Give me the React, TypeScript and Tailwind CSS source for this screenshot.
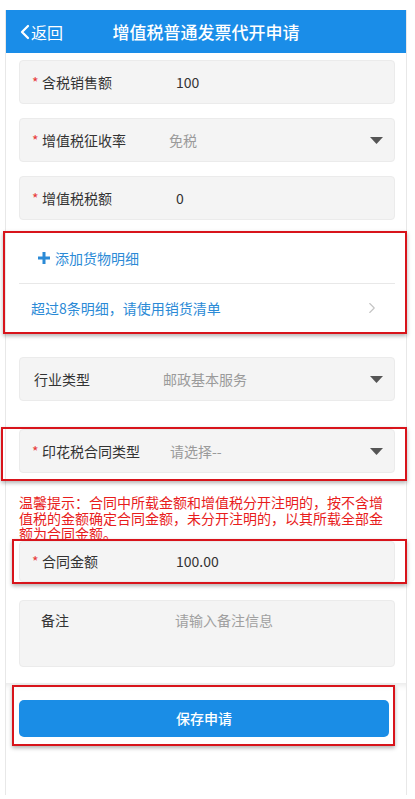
import { ChevronLeft, ChevronRight } from "lucide-react";

const FONT = "font-['Microsoft_YaHei','Noto_Sans_CJK_SC',sans-serif]";

type FieldProps = {
  label: string;
  value: string;
  required?: boolean;
  muted?: boolean;
  select?: boolean;
  labelBox?: string; // width of star+label block
  pad?: string;
  height?: string;
};

function Caret() {
  return (
    <svg width="13" height="7" viewBox="0 0 13 7" className="shrink-0">
      <path d="M0 0 H13 L6.5 7 Z" fill="#555" />
    </svg>
  );
}

function Field({
  label,
  value,
  required = true,
  muted = false,
  select = false,
  labelBox = "w-[144px]",
  pad = "pl-[12px]",
  height = "h-[44px]",
}: FieldProps) {
  return (
    <div
      className={[
        "flex items-center rounded-[4px] border border-[#ebebeb] bg-[#f4f4f4] pr-[11px] text-[14px] leading-[20px]",
        pad,
        height,
      ].join(" ")}
    >
      <div className={["flex shrink-0 items-center", labelBox].join(" ")}>
        {required && <span className="w-[10px] text-[#e83a3a]">*</span>}
        <span className="text-[#333]">{label}</span>
      </div>
      <span className={["flex-1", muted ? "text-[#9a9a9a]" : "text-[#333]"].join(" ")}>
        {value}
      </span>
      {select && <Caret />}
    </div>
  );
}

export default function App() {
  return (
    <div className={["h-[799px] w-full overflow-hidden bg-white pt-[10px]", FONT].join(" ")}>
      <div className="ml-[5px] h-[785px] w-[402px] border-x border-[#e8e8e8]">
        {/* header */}
        <div className="relative flex h-[43px] items-center justify-center bg-[#1a8de8] text-white">
          <div className="absolute left-[7px] top-0 flex h-full items-center">
            <ChevronLeft className="h-[24px] w-[24px]" strokeWidth={2.25} />
            <span className="-ml-[6px] text-[16px]">返回</span>
          </div>
          <span className="text-[17px] font-medium">增值税普通发票代开申请</span>
        </div>

        {/* form */}
        <div className="pl-[13px] pr-[11px] pt-[7px]">
          <Field label="含税销售额" value="100" />
          <div className="mt-[14px]">
            <Field label="增值税征收率" value="免税" muted select labelBox="w-[137px]" />
          </div>
          <div className="mt-[14px]">
            <Field label="增值税税额" value="0" />
          </div>

          {/* 货物明细 */}
          <div className="-ml-[16px] -mr-[12px] mt-[11px] border-2 border-[#d8141b] pl-[14px] pr-[10px] shadow-[0_2px_4px_rgba(0,0,0,0.3)]">
            <div className="flex h-[50px] items-center pl-[19px] text-[14px] text-[#2b8ad6]">
              <svg width="12" height="12" viewBox="0 0 12 12" className="mr-[5px]">
                <path d="M6 0 V12 M0 6 H12" stroke="#2b8ad6" strokeWidth="3" />
              </svg>
              添加货物明细
            </div>
            <div className="h-px bg-[#e8e8e8]" />
            <div className="flex h-[48px] items-center justify-between pl-[12px] pr-[14px] text-[14px] text-[#2b8ad6]">
              <span>超过8条明细，请使用销货清单</span>
              <ChevronRight className="h-[18px] w-[18px] text-[#c4c4c4]" strokeWidth={1.5} />
            </div>
          </div>

          <div className="mt-[23px]">
            <Field
              label="行业类型"
              value="邮政基本服务"
              muted
              select
              required={false}
              pad="pl-[14px]"
              labelBox="w-[129px]"
            />
          </div>

          <div className="-ml-[18px] -mr-[12px] mt-[26px] border-2 border-[#d8141b] pb-[6px] pl-[16px] pr-[10px] shadow-[0_2px_4px_rgba(0,0,0,0.3)]">
            <Field label="印花税合同类型" value="请选择--" muted select labelBox="w-[138px]" />
          </div>

          <p className="mt-[14px] text-[14px] leading-[15.5px] text-[#e81c1c]">
            温馨提示：合同中所载金额和增值税分开注明的，按不含增值税的金额确定合同金额，未分开注明的，以其所载全部金额为合同金额。
          </p>

          <div className="relative -ml-[7px] -mr-[12px] -mt-[3px] border-2 border-[#d8141b] pl-[5px] pr-[10px] shadow-[0_2px_4px_rgba(0,0,0,0.3)]">
            <Field label="合同金额" value="100.00" height="h-[41px]" />
          </div>

          {/* 备注 */}
          <div className="mt-[16px] flex h-[67px] rounded-[4px] border border-[#ebebeb] bg-[#f4f4f4] pl-[21px] pt-[9px] text-[14px] leading-[20px]">
            <span className="w-[134px] text-[#333]">备注</span>
            <span className="text-[#a0a0a0]">请输入备注信息</span>
          </div>
        </div>

        {/* footer */}
        <div className="mt-[16px] pl-[6px] pr-[11px] pt-[2px] shadow-[inset_0_7px_6px_-5px_rgba(0,0,0,0.1)]">
          <div className="border-2 border-[#d8141b] pb-[7px] pl-[5px] pr-[4px] pt-[13px] shadow-[0_2px_4px_rgba(0,0,0,0.3)]">
            <button className="flex h-[37px] w-full items-center justify-center rounded-[5px] bg-[#1a8de6] text-[14px] font-medium text-white">
              保存申请
            </button>
          </div>
        </div>
      </div>
    </div>
  );
}
